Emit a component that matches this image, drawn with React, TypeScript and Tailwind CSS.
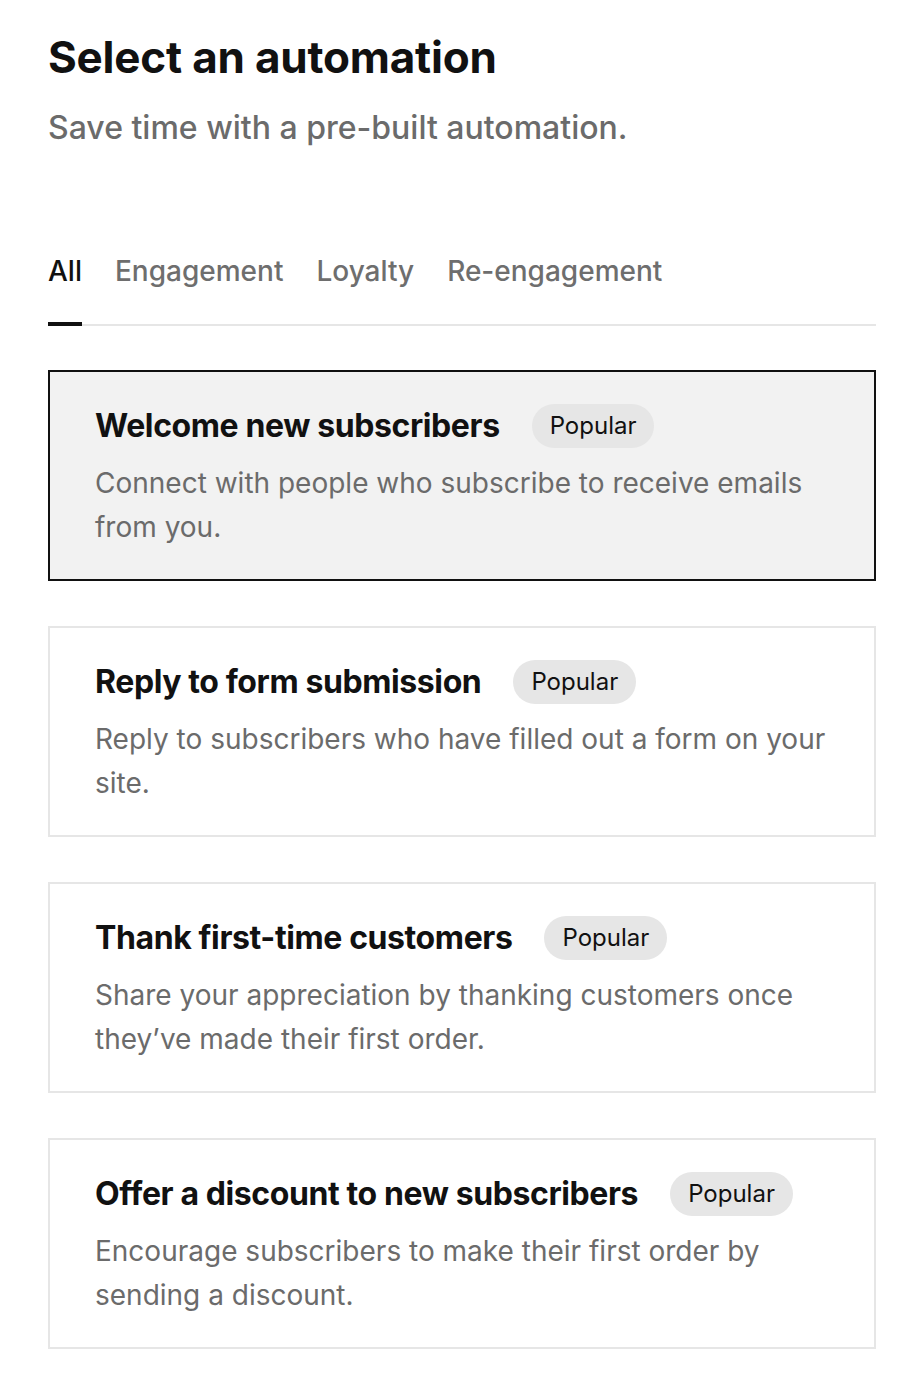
import React from "react";

const cards = [
  {
    title: "Welcome new subscribers",
    desc: "Connect with people who subscribe to receive emails from you.",
    selected: true,
  },
  {
    title: "Reply to form submission",
    desc: "Reply to subscribers who have filled out a form on your site.",
  },
  {
    title: "Thank first-time customers",
    desc: "Share your appreciation by thanking customers once they\u2019ve made their first order.",
  },
  {
    title: "Offer a discount to new subscribers",
    desc: "Encourage subscribers to make their first order by sending a discount.",
  },
];

const tabs = ["All", "Engagement", "Loyalty", "Re-engagement"];

export default function App() {
  return (
    <div
      className="min-h-[1384px] w-full bg-white pl-[48px] pr-[42px] pt-[33px] pb-[35px] text-[#111111]"
      style={{ fontFamily: "Inter, 'Noto Sans', sans-serif" }}
    >
      <h1 className="text-[44px] font-bold leading-[48px] tracking-[-0.2px]">Select an automation</h1>
      <p className="mt-[27px] text-[32px] font-medium leading-[40px] text-[#6b6b6b]">
        Save time with a pre-built automation.
      </p>

      <div className="mt-[105px] flex gap-[33px] border-b-2 border-[#e6e6e6]">
        {tabs.map((t, i) => (
          <div
            key={t}
            className={
              i === 0
                ? "-mb-[2px] border-b-4 border-[#111111] pb-[33px] text-[28px] font-medium leading-[36px] text-[#111111]"
                : "-mb-[2px] border-b-4 border-transparent pb-[33px] text-[28px] font-medium leading-[36px] text-[#6e6e6e]"
            }
          >
            {t}
          </div>
        ))}
      </div>

      <div className="mt-[44px] flex flex-col gap-[45px]">
        {cards.map((c) => (
          <div
            key={c.title}
            className={
              c.selected
                ? "border-2 border-[#111111] bg-[#f2f2f2] px-[45px] pt-[32px] pb-[30px]"
                : "border-2 border-[#e6e6e6] bg-white px-[45px] pt-[32px] pb-[30px]"
            }
          >
            <div className="flex h-[44px] items-center gap-[32px]">
              <span className="text-[32px] font-bold leading-[44px] tracking-[-0.4px]">{c.title}</span>
              <span className="flex h-[44px] items-center rounded-full bg-[#e6e6e6] px-[18px] text-[24px] text-[#111111]">
                Popular
              </span>
            </div>
            <p className="mt-[13px] text-[28px] leading-[44px] text-[#6b6b6b]">{c.desc}</p>
          </div>
        ))}
      </div>
    </div>
  );
}
